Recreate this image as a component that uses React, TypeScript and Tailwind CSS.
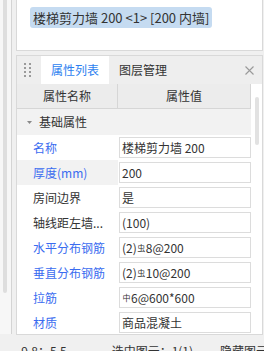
import React from 'react';

type Row = { name: string; value: React.ReactNode; blue?: boolean; hl?: boolean };

const Hrb = () => <span className="text-[8px] leading-none align-[3px] mx-[0.5px]">虫</span>;
const Hpb = () => <span className="text-[8px] leading-none align-[3px] mx-[0.5px]">中</span>;

const rows: Row[] = [
  { name: '名称', value: '楼梯剪力墙 200', blue: true },
  { name: '厚度(mm)', value: '200', blue: true, hl: true },
  { name: '房间边界', value: '是' },
  { name: '轴线距左墙...', value: '(100)' },
  { name: '水平分布钢筋', value: <>(2)<Hrb />8@200</>, blue: true },
  { name: '垂直分布钢筋', value: <>(2)<Hrb />10@200</>, blue: true },
  { name: '拉筋', value: <><Hpb />6@600*600</>, blue: true },
  { name: '材质', value: '商品混凝土', blue: true },
];

export default function App() {
  return (
    <div className="w-[264px] h-[351px] overflow-hidden bg-[#f0f0f0] flex flex-col font-['Noto_Sans_CJK_SC',sans-serif] text-[#333333]">
      <div className="flex h-[335px] shrink-0">
        <div className="w-[12px] h-[334px] bg-[#f7f7f7] border-r border-[#d4d4d4] flex">
          <div className="ml-[3px] w-[4px] h-[293px] rounded-b-[2px] bg-[#dedede]" />
        </div>
        <div className="ml-[4px] w-[247px] flex flex-col">
          <div className="h-[51px] bg-white border-x border-b border-[#d9d9d9] pl-[13px] pt-[4px] shrink-0">
            <div className="inline-flex items-center h-[21px] px-[3px] rounded-[3px] bg-[#c5dbf1] text-[13px] leading-none text-[#333]">
              楼梯剪力墙 200 &lt;1&gt; [200 内墙]
            </div>
          </div>
          <div className="mt-[4px] flex-1 border border-[#d9d9d9] bg-white flex flex-col overflow-hidden">
            <div className="h-[28px] bg-[#eeeeee] flex items-stretch shrink-0">
              <div className="ml-[7px] mr-[11px] w-[6px] grid grid-cols-[2px_2px] gap-x-[3px] gap-y-[2px] content-center">
                {Array.from({ length: 8 }).map((_, i) => (
                  <div key={i} className="w-[2px] h-[2px] bg-[#9a9a9a]" />
                ))}
              </div>
              <div className="w-[68px] bg-white flex items-center justify-center text-[12px] text-[#2d7ff0]">属性列表</div>
              <div className="w-[68px] flex items-center justify-center text-[12px] text-[#333]">图层管理</div>
              <div className="flex-1 flex items-center justify-end pr-[8px]">
                <svg width="9" height="9" viewBox="0 0 9 9" stroke="#9a9a9a" strokeWidth="1.1">
                  <path d="M0.5 0.5 L8.5 8.5 M8.5 0.5 L0.5 8.5" />
                </svg>
              </div>
            </div>
            <div className="flex flex-1">
              <div className="w-[234px] flex flex-col">
                <div className="h-[25px] flex bg-[#ececec] border-b border-[#d6d6d6] text-[12px]">
                  <div className="w-[101px] border-r border-[#d6d6d6] flex items-center justify-center">属性名称</div>
                  <div className="flex-1 border-r border-[#d6d6d6] flex items-center justify-center">属性值</div>
                </div>
                <div className="h-[26px] bg-[#f2f2f2] flex items-center text-[12px] shrink-0">
                  <svg className="ml-[10px]" width="5" height="3" viewBox="0 0 5 3"><path d="M0 0 H5 L2.5 3 Z" fill="#8a8a8a" /></svg>
                  <span className="ml-[7px]">基础属性</span>
                </div>
                {rows.map((r) => (
                  <div key={r.name} className="h-[25px] flex shrink-0 text-[12px]">
                    <div className={`w-[101px] pl-[16px] flex items-center ${r.hl ? 'bg-[#f2f2f2]' : ''} ${r.blue ? 'text-[#3a6cf0]' : 'text-[#333]'}`}>
                      {r.name}
                    </div>
                    <div className="flex-1 pl-[1px] py-[2px]">
                      <div className="h-[21px] border border-[#dcdcdc] flex items-center pl-[2px] whitespace-nowrap leading-none">
                        {r.value}
                      </div>
                    </div>
                  </div>
                ))}
              </div>
              <div className="flex-1">
                <div className="ml-[4px] mt-[13px] w-[4px] h-[48px] rounded-[2px] bg-[#e2e2e2]" />
              </div>
            </div>
          </div>
        </div>
      </div>
      <div className="flex-1 flex items-start pt-[7px] text-[12px] leading-[17px] whitespace-nowrap text-[#333]">
        <span className="ml-[1px]">.</span>
        <span className="ml-[17px]">9.8；5.5</span>
        <span className="ml-[45px]">选中图元：1(1)</span>
        <span className="ml-[27px]">隐藏图元：0</span>
      </div>
    </div>
  );
}
